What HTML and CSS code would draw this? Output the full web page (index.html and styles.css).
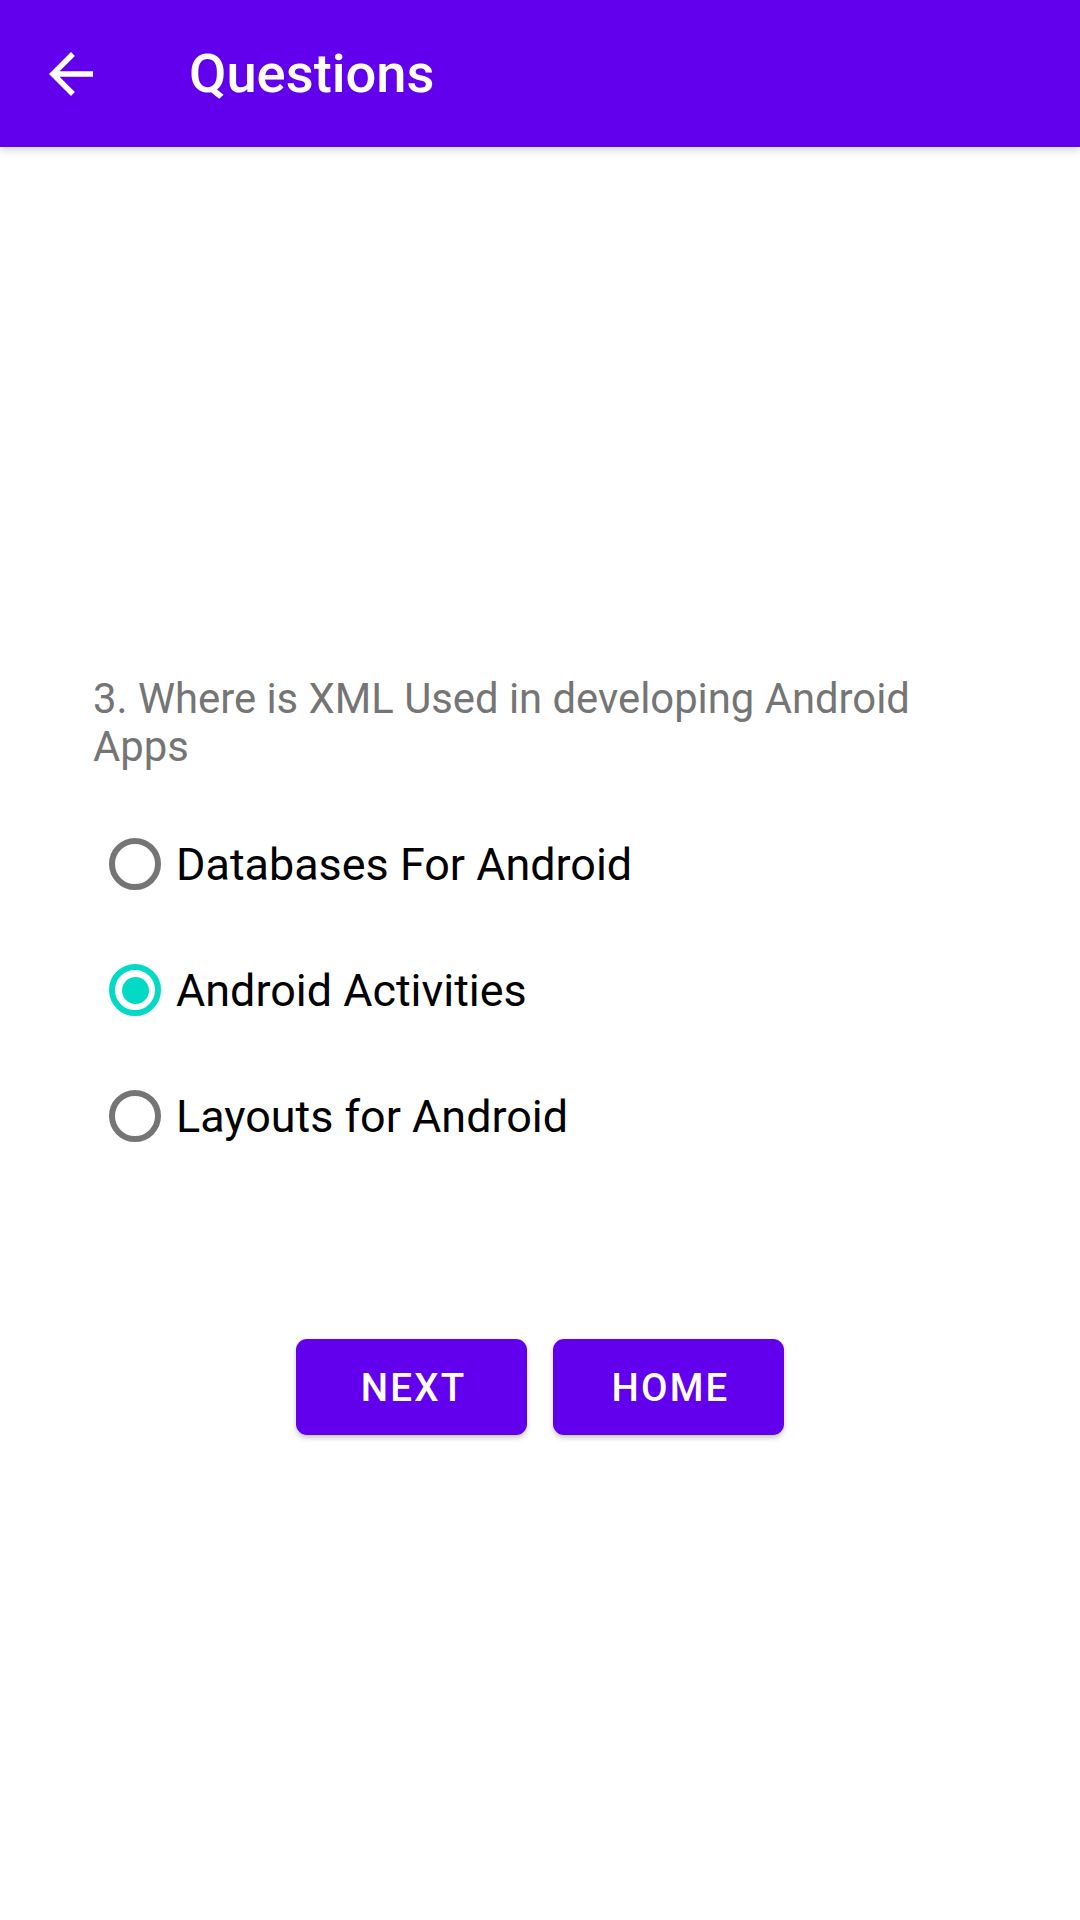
FILE: index.html
```html
<!DOCTYPE html>
<html>
<head>
<meta charset="utf-8">
<link rel="stylesheet" href="styles.css">
</head>
<body>
<header class="appbar">
  <svg class="back" viewBox="0 0 24 24" width="66" height="66"><path fill="#fff" d="M20 11H7.83l5.59-5.59L12 4l-8 8 8 8 1.41-1.41L7.83 13H20v-2z"/></svg>
  <h1 class="title">Questions</h1>
</header>
<main class="content">
  <p class="question">3. Where is XML Used in developing Android Apps</p>
  <div class="options">
    <div class="option"><span class="radio"></span><span class="label">Databases For Android</span></div>
    <div class="option"><span class="radio checked"></span><span class="label">Android Activities</span></div>
    <div class="option"><span class="radio"></span><span class="label">Layouts for Android</span></div>
  </div>
  <div class="actions">
    <button class="btn">NEXT</button>
    <button class="btn">HOME</button>
  </div>
</main>
</body>
</html>
```

FILE: styles.css
```css
html, body {
  margin: 0;
  padding: 0;
  background: #ffffff;
  font-family: Roboto, "Noto Sans", sans-serif;
}
body {
  width: 1080px;
  height: 1920px;
  overflow: hidden;
}
.appbar {
  height: 147px;
  background: #6200ee;
  display: flex;
  align-items: center;
  box-shadow: 0 3px 8px rgba(0, 0, 0, 0.18);
  position: relative;
  z-index: 1;
}
.back {
  margin-left: 38px;
  flex: none;
}
.title {
  margin: 0 0 0 85px;
  font-size: 54.3px;
  font-weight: 500;
  color: #ffffff;
}
.content {
  padding-top: 528px;
}
.question {
  margin: 0;
  padding: 0 92px 0 93px;
  font-size: 41.8px;
  line-height: 48px;
  color: #757575;
}
.options {
  margin-top: 30px;
  display: flex;
  flex-direction: column;
}
.option {
  height: 126px;
  display: flex;
  align-items: center;
  padding-left: 109px;
}
.radio {
  width: 52px;
  height: 52px;
  box-sizing: border-box;
  border: 6px solid #757575;
  border-radius: 50%;
  flex: none;
  display: flex;
  align-items: center;
  justify-content: center;
}
.radio.checked {
  border-color: #03dac5;
}
.radio.checked::after {
  content: "";
  width: 27px;
  height: 27px;
  border-radius: 50%;
  background: #03dac5;
}
.label {
  margin-left: 15px;
  font-size: 44.9px;
  color: #000000;
}
.actions {
  margin-top: 160px;
  display: flex;
  justify-content: center;
  gap: 26px;
}
.btn {
  width: 231px;
  height: 96px;
  border: none;
  border-radius: 11px;
  background: #6200ee;
  color: #ffffff;
  font-family: Roboto, "Noto Sans", sans-serif;
  font-size: 38.5px;
  font-weight: 500;
  letter-spacing: 2.2px;
  box-shadow: 0 3px 5px rgba(0, 0, 0, 0.22);
  padding: 0 0 0 4px;
}
```
